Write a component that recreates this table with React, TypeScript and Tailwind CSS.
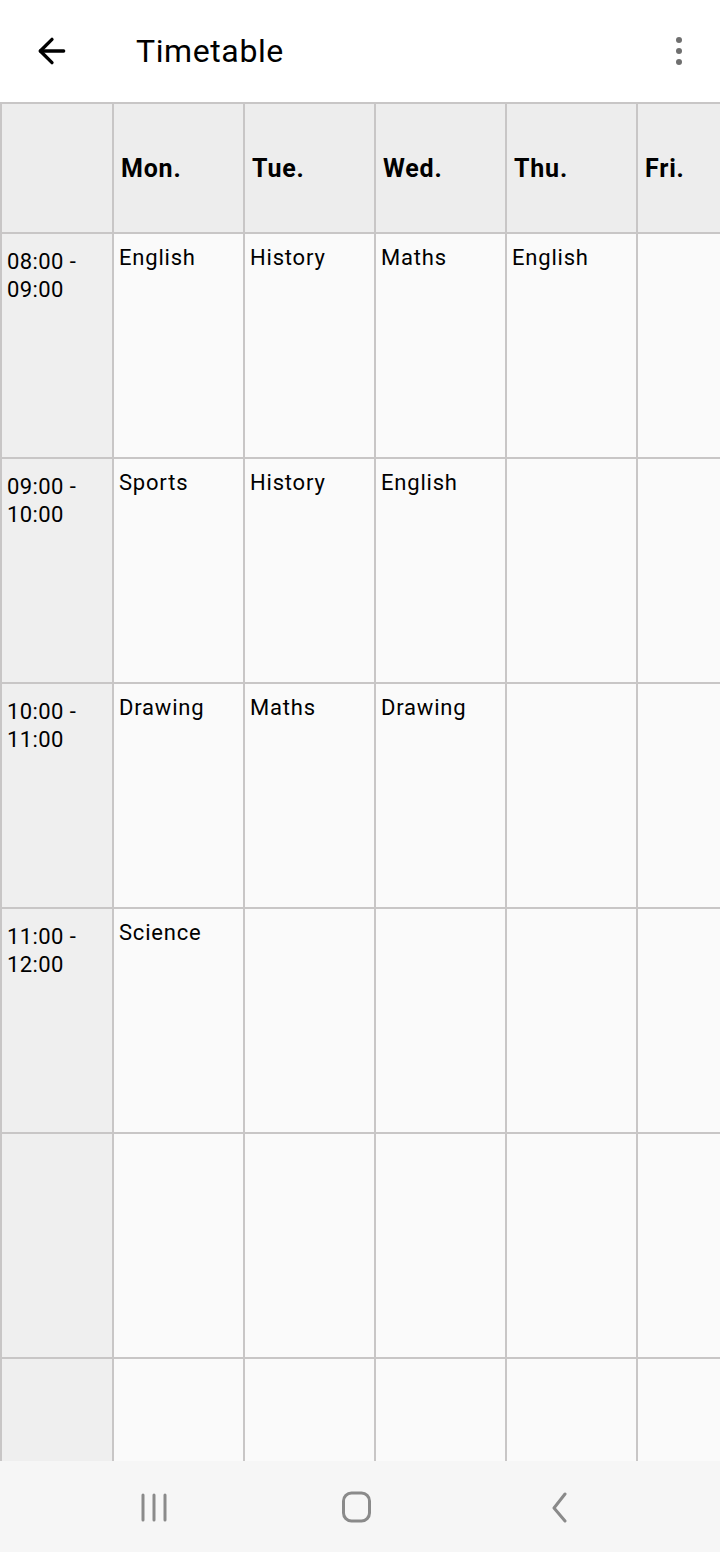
import { ArrowLeft } from "lucide-react";

const days = ["Mon.", "Tue.", "Wed.", "Thu.", "Fri."];

const slots: { time: string; lessons: string[] }[] = [
  { time: "08:00 -\n09:00", lessons: ["English", "History", "Maths", "English", ""] },
  { time: "09:00 -\n10:00", lessons: ["Sports", "History", "English", "", ""] },
  { time: "10:00 -\n11:00", lessons: ["Drawing", "Maths", "Drawing", "", ""] },
  { time: "11:00 -\n12:00", lessons: ["Science", "", "", "", ""] },
  { time: "", lessons: ["", "", "", "", ""] },
  { time: "", lessons: ["", "", "", "", ""] },
];

export default function App() {
  return (
    <div
      className="flex h-[1552px] w-[720px] flex-col overflow-hidden bg-white text-black"
      style={{ fontFamily: "Roboto, 'Noto Sans', sans-serif" }}
    >
      {/* app bar */}
      <header className="flex h-[102px] shrink-0 items-center bg-white">
        <button className="ml-[32px] flex h-10 w-10 items-center justify-center">
          <ArrowLeft size={40} strokeWidth={2} />
        </button>
        <h1 className="ml-[64px] text-[32px] leading-none tracking-[0.6px]">Timetable</h1>
        <div className="ml-auto mr-[38px] flex flex-col items-center gap-[5px]">
          <span className="h-[6px] w-[6px] rounded-full bg-[#6f6f6f]" />
          <span className="h-[6px] w-[6px] rounded-full bg-[#6f6f6f]" />
          <span className="h-[6px] w-[6px] rounded-full bg-[#6f6f6f]" />
        </div>
      </header>

      {/* table */}
      <div className="h-[1359px] shrink-0 overflow-hidden">
        <div className="grid w-max grid-cols-[110px_repeat(5,129px)] auto-rows-[223px] gap-[2px] bg-[#c8c6c6] pl-[2px] pt-[2px] [grid-template-rows:128px]">
          <div className="bg-[#ededed]" />
          {days.map((d) => (
            <div key={d} className="flex items-center bg-[#ededed] pl-[7px] pt-[2px] text-[25px] font-bold tracking-[0.8px]">
              {d}
            </div>
          ))}
          {slots.map((s, i) => (
            <>
              <div
                key={"t" + i}
                className="whitespace-pre-line bg-[#efefef] pl-[5px] pt-[14px] text-[22px] leading-[28px] tracking-[0.4px]"
              >
                {s.time}
              </div>
              {s.lessons.map((l, j) => (
                <div key={i + "-" + j} className="bg-[#fafafa] pl-[5px] pt-[10px] text-[22px] leading-[28px] tracking-[0.8px]">
                  {l}
                </div>
              ))}
            </>
          ))}
        </div>
      </div>

      {/* system nav */}
      <nav className="flex h-[91px] shrink-0 items-center gap-[142px] bg-[#f6f6f6] pl-[125px]">
        <div className="flex w-[60px] justify-center">
          <svg width="30" height="30" viewBox="0 0 30 30">
            <path d="M3 3v25M14 3v25M25 3v25" stroke="#8a8a8a" strokeWidth="3" strokeLinecap="round" />
          </svg>
        </div>
        <div className="flex w-[60px] justify-center">
          <svg width="32" height="32" viewBox="0 0 32 32">
            <rect x="2.5" y="2" width="26" height="28" rx="8" fill="none" stroke="#8a8a8a" strokeWidth="3" />
          </svg>
        </div>
        <div className="flex w-[60px] justify-center">
          <svg width="26" height="32" viewBox="0 0 26 32">
            <path d="M19 3 8 17l11 13" fill="none" stroke="#8a8a8a" strokeWidth="3" strokeLinecap="round" strokeLinejoin="round" />
          </svg>
        </div>
      </nav>
    </div>
  );
}
